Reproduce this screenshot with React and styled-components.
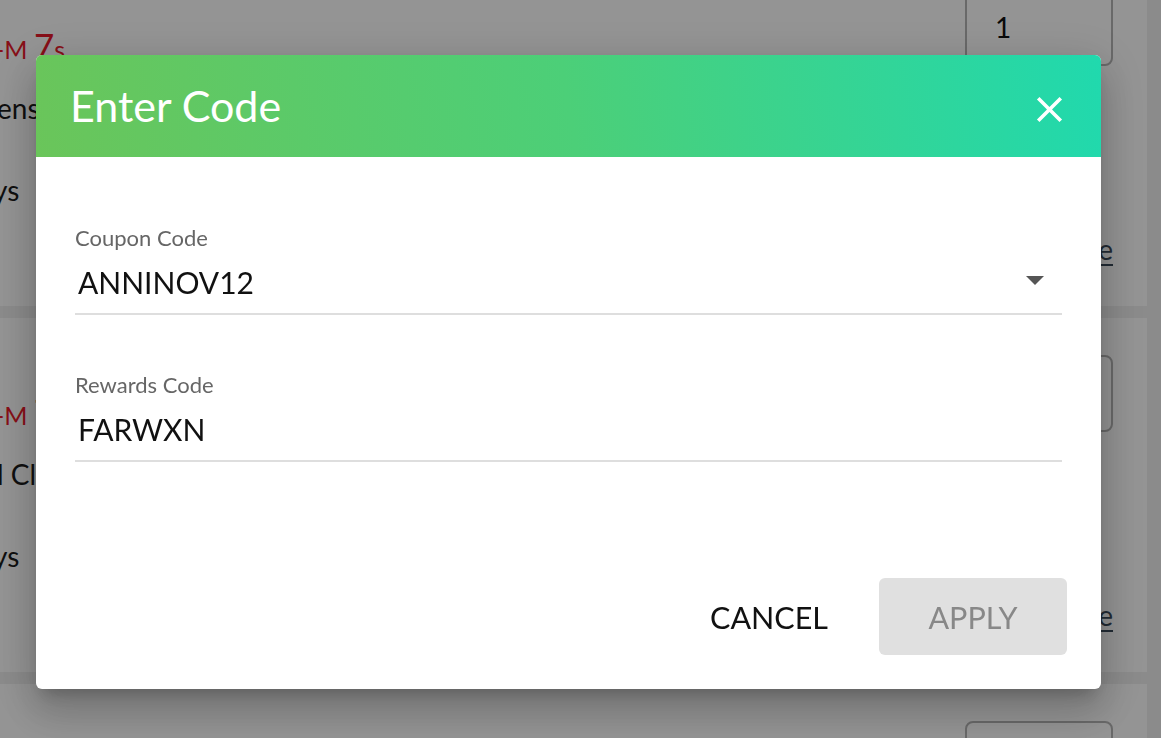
import React from "react";
import styled, { createGlobalStyle } from "styled-components";

const GlobalStyle = createGlobalStyle`
  html, body {
    margin: 0;
    padding: 0;
    background: #f0f0f0;
    overflow: hidden;
    font-family: Lato, "Open Sans", sans-serif;
  }
`;

const items = [
  { timer: "-M ", big: "7", small: "s", title: "ensions", meta: "ys", link: "e" },
  { timer: "-M ", big: "7", small: "s", title: "l Classic", meta: "ys", link: "e" },
  { timer: "-M ", big: "7", small: "s", title: "ensions", meta: "ys", link: "e" },
];

const App = () => {
  return (
    <>
      <GlobalStyle />
      <Page>
        {items.map((item, i) => (
          <Card key={i}>
            <CardInfo>
              <Timer>
                {item.timer}
                <TimerBig>{item.big}</TimerBig>
                {item.small}
              </Timer>
              <Title>{item.title}</Title>
              <Meta>{item.meta}</Meta>
            </CardInfo>
            <CardAside>
              <QtyBox>1</QtyBox>
              <RemoveLink href="#">Remove</RemoveLink>
            </CardAside>
          </Card>
        ))}
      </Page>

      <Overlay>
        <Dialog>
          <Header>
            <HeaderTitle>Enter Code</HeaderTitle>
            <CloseButton aria-label="close">
              <svg width="43" height="43" viewBox="0 0 24 24" fill="#fff">
                <path d="M19 6.41L17.59 5 12 10.59 6.41 5 5 6.41 10.59 12 5 17.59 6.41 19 12 13.41 17.59 19 19 17.59 13.41 12z" />
              </svg>
            </CloseButton>
          </Header>
          <Body>
            <Field>
              <Label>Coupon Code</Label>
              <ValueRow>
                <Value>ANNINOV12</Value>
                <Caret />
              </ValueRow>
            </Field>
            <Field $gap>
              <Label>Rewards Code</Label>
              <ValueRow>
                <Value>FARWXN</Value>
              </ValueRow>
            </Field>
          </Body>
          <Footer>
            <TextButton>CANCEL</TextButton>
            <ApplyButton disabled>APPLY</ApplyButton>
          </Footer>
        </Dialog>
      </Overlay>
    </>
  );
};

export default App;

const Page = styled.div`
  margin-top: -48px;
  width: 1147px;
  display: flex;
  flex-direction: column;
  gap: 12px;
`;

const Card = styled.div`
  height: 354px;
  background: #fff;
  display: flex;
  justify-content: space-between;
  overflow: hidden;
`;

const CardInfo = styled.div`
  display: flex;
  flex-direction: column;
  padding-top: 76px;
  margin-left: -3px;
  color: #1a1a1a;
`;

const Timer = styled.div`
  color: #e81a2a;
  font-size: 25px;
  line-height: 34px;
  margin-left: -2px;
`;

const TimerBig = styled.span`
  font-size: 35px;
`;

const Title = styled.div`
  font-size: 28px;
  line-height: 34px;
  margin-top: 25px;
`;

const Meta = styled.div`
  font-size: 28px;
  line-height: 34px;
  margin-top: 48px;
  margin-left: -4px;
`;

const CardAside = styled.div`
  display: flex;
  flex-direction: column;
  align-items: flex-end;
  padding-top: 37px;
  margin-right: 34px;
`;

const QtyBox = styled.div`
  box-sizing: border-box;
  width: 148px;
  height: 77px;
  border: 2px solid #b5b5b5;
  border-radius: 8px;
  font-size: 28px;
  padding: 19px 0 0 28px;
  color: #111;
`;

const RemoveLink = styled.a`
  margin-top: 166px;
  font-size: 28px;
  color: #3a4a5a;
  text-decoration: underline;
  text-underline-offset: 4px;
`;

const Overlay = styled.div`
  position: fixed;
  inset: 0;
  background: rgba(0, 0, 0, 0.42);
  padding: 55px 0 0 36px;
`;

const Dialog = styled.div`
  width: 1065px;
  background: #fff;
  border-radius: 6px;
  overflow: hidden;
  box-shadow: 0 11px 15px -7px rgba(0, 0, 0, 0.2),
    0 24px 38px 3px rgba(0, 0, 0, 0.14), 0 9px 46px 8px rgba(0, 0, 0, 0.12);
`;

const Header = styled.div`
  height: 102px;
  display: flex;
  align-items: center;
  justify-content: space-between;
  padding: 0 30px 0 34px;
  background: linear-gradient(80deg, #6ac55a 0%, #4ccf78 50%, #20d9ae 100%);
`;

const HeaderTitle = styled.h2`
  margin: 0;
  color: #fff;
  font-size: 43px;
  font-weight: 400;
  line-height: 52px;
`;

const CloseButton = styled.button`
  border: 0;
  background: transparent;
  padding: 0;
  margin-top: 7px;
  display: flex;
  cursor: pointer;
`;

const Body = styled.div`
  padding: 68px 39px 0;
`;

const Field = styled.div`
  margin-top: ${({ $gap }) => ($gap ? "57px" : "0")};
  border-bottom: 2px solid #dedede;
`;

const Label = styled.div`
  font-size: 22px;
  line-height: 26px;
  color: #666;
`;

const ValueRow = styled.div`
  display: flex;
  align-items: center;
  justify-content: space-between;
  margin-top: 13px;
  padding: 0 18px 13px 3px;
`;

const Value = styled.div`
  font-size: 30px;
  line-height: 36px;
  color: #111;
`;

const Caret = styled.span`
  width: 0;
  height: 0;
  margin-top: -4px;
  border-left: 9px solid transparent;
  border-right: 9px solid transparent;
  border-top: 9px solid #555;
`;

const Footer = styled.div`
  display: flex;
  justify-content: flex-end;
  gap: 16px;
  padding: 116px 34px 34px;
`;

const TextButton = styled.button`
  height: 77px;
  width: 188px;
  border: 0;
  background: transparent;
  font-family: Lato, sans-serif;
  font-size: 30.5px;
  color: #111;
  cursor: pointer;
`;

const ApplyButton = styled(TextButton)`
  background: #e0e0e0;
  border-radius: 6px;
  color: #888;
  cursor: default;
`;
